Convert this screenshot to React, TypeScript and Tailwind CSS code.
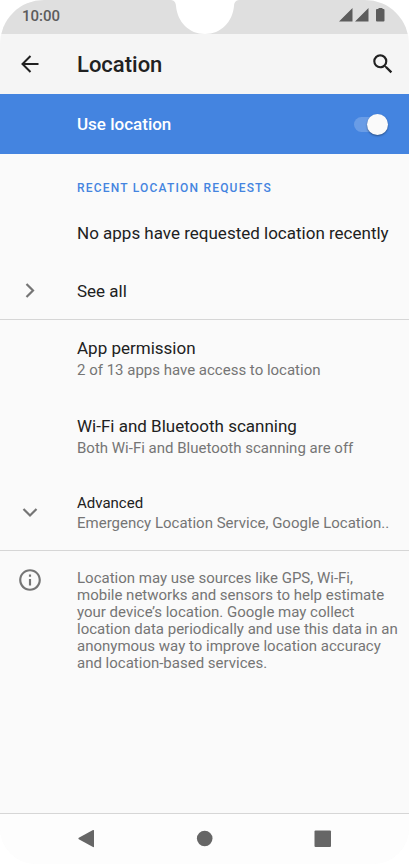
import type { ReactNode } from 'react';
import { useState } from 'react';

const titleClass = 'text-[17px] leading-6 text-[#212121]';
const summaryClass = 'text-[15px] leading-5 text-[#757575]';

type RowProps = {
  icon?: ReactNode;
  className?: string;
  children: ReactNode;
};

/** Settings row: fixed icon gutter on the left, text on the right. */
function Row({ icon, className = '', children }: RowProps) {
  return (
    <button type="button" className={`flex w-full items-center text-left ${className}`}>
      <span className="flex w-[77px] shrink-0 pl-[18px] text-[#757575]">{icon}</span>
      <span className="flex min-w-0 flex-1 flex-col">{children}</span>
    </button>
  );
}

function StatusBar() {
  return (
    <div className="relative flex h-[34px] items-start justify-between bg-[#dfdfdf] pr-6 pl-[22px] text-[#5c5c5c]">
      <span className="pt-[6px] text-[15px] leading-5 font-medium">10:00</span>
      {/* camera notch */}
      <svg className="absolute top-0 left-1/2 -translate-x-1/2" width="70" height="34" viewBox="0 0 70 34" aria-hidden="true">
        <path d="M1 0C4 .4 5.800 2 6 6C7.500 22 19 34 35 34C51 34 62.500 22 64 6C64.200 2 66 .4 69 0Z" fill="#fff" />
      </svg>
      <svg className="mt-2" width="46" height="14" viewBox="0 0 46 14" fill="currentColor" aria-hidden="true">
        <path d="M0 13.500 13.500 0V13.500ZM16 13.500 29.500 0V13.500Z" />
        <path d="M39.500 0H43.500V1H44.500Q45.500 1 45.500 2V12.500Q45.500 13.500 44.500 13.500H38Q37 13.500 37 12.500V2Q37 1 38 1H39.500Z" />
      </svg>
    </div>
  );
}

function Header() {
  return (
    <header className="flex h-[60px] items-center bg-[#f5f5f5] text-[#212121]">
      <div className="flex w-[77px] shrink-0 pl-[18px]">
        <button type="button" aria-label="Back">
          <svg width="24" height="24" viewBox="0 0 24 24" fill="none" stroke="currentColor" strokeWidth="2" aria-hidden="true">
            <path d="M20.500 12H5M12.500 4 4.500 12 12.500 20" />
          </svg>
        </button>
      </div>
      <h1 className="flex-1 pt-[2px] text-[22px] leading-7 font-medium">Location</h1>
      <button type="button" aria-label="Search" className="mr-[13px]">
        <svg width="26" height="26" viewBox="0 0 24 24" fill="currentColor" aria-hidden="true">
          <path d="M15.500 14h-.79l-.28-.27A6.471 6.471 0 0 0 16 9.500 6.500 6.500 0 1 0 9.500 16c1.610 0 3.090-.59 4.230-1.570l.27.28v.79l5 4.990L20.490 19l-4.990-5zm-6 0C7.010 14 5 11.990 5 9.500S7.010 5 9.500 5 14 7.010 14 9.500 11.990 14 9.500 14z" />
        </svg>
      </button>
    </header>
  );
}

function LocationSwitch() {
  const [on, setOn] = useState(true);

  return (
    <label className="flex h-[60px] cursor-pointer items-center justify-between bg-[#4484e0] pr-[21px] pl-[77px]">
      <span className="text-[17px] leading-6 font-medium text-white">Use location</span>
      <input
        type="checkbox"
        role="switch"
        className="sr-only"
        checked={on}
        onChange={(e) => setOn(e.target.checked)}
      />
      <span className={`flex h-[15px] w-[34px] items-center rounded-full bg-white/20 ${on ? 'justify-end' : 'justify-start'}`}>
        <span className="size-[21px] shrink-0 rounded-full bg-[#fafafa] shadow-[0_1px_2px_rgba(0,0,0,0.4)]" />
      </span>
    </label>
  );
}

function NavBar() {
  return (
    <nav className="flex h-[51px] items-center justify-center gap-[94px] border-t border-[#d6d6d6] bg-[#fdfdfd] text-[#666]">
      <button type="button" aria-label="Back">
        <svg width="24" height="24" viewBox="0 0 24 24" fill="currentColor" aria-hidden="true">
          <path d="M3.800 10.800 18 3Q19 2.700 19 3.700V19.500Q19 20.500 18 20L3.800 12.200Q2.800 11.500 3.800 10.800Z" />
        </svg>
      </button>
      <button type="button" aria-label="Home">
        <svg width="24" height="24" viewBox="0 0 24 24" fill="currentColor" aria-hidden="true">
          <circle cx="11.700" cy="11.500" r="7.800" />
        </svg>
      </button>
      <button type="button" aria-label="Overview">
        <svg width="24" height="24" viewBox="0 0 24 24" fill="currentColor" aria-hidden="true">
          <rect x="3.500" y="3.400" width="16.500" height="16.500" rx="1" />
        </svg>
      </button>
    </nav>
  );
}

export default function App() {
  return (
    <div className="min-h-screen bg-white font-['Roboto',sans-serif]">
      <div className="flex min-h-screen flex-col overflow-hidden rounded-t-[44px] rounded-b-[36px] bg-[#fafafa]">
        <StatusBar />
        <Header />
        <main className="flex-1">
          <LocationSwitch />

          <section className="border-b border-[#d6d6d6]">
            <h2 className="pt-6 pb-[6px] pl-[77px] text-xs leading-5 font-medium tracking-widest text-[#4484e0] uppercase">
              Recent location requests
            </h2>
            <p className={`py-[17px] pl-[77px] whitespace-nowrap ${titleClass}`}>No apps have requested location recently</p>
            <Row
              className="h-[57px]"
              icon={
                <svg width="24" height="24" viewBox="0 0 24 24" fill="none" stroke="currentColor" strokeWidth="2.200" aria-hidden="true">
                  <path d="M8.500 5 15 11.500 8.500 18" />
                </svg>
              }
            >
              <span className={titleClass}>See all</span>
            </Row>
          </section>

          <section className="border-b border-[#d6d6d6]">
            <Row className="pt-4 pb-[18px]">
              <span className={titleClass}>App permission</span>
              <span className={summaryClass}>2 of 13 apps have access to location</span>
            </Row>
            <Row className="pt-4 pb-[18px]">
              <span className={titleClass}>Wi-Fi and Bluetooth scanning</span>
              <span className={summaryClass}>Both Wi-Fi and Bluetooth scanning are off</span>
            </Row>
            <Row
              className="py-[17px]"
              icon={
                <svg width="24" height="24" viewBox="0 0 24 24" fill="none" stroke="currentColor" strokeWidth="2.200" aria-hidden="true">
                  <path d="M5.500 8 12 14.500 18.500 8" />
                </svg>
              }
            >
              <span className="text-[15px] leading-5 text-[#212121]">Advanced</span>
              <span className={`whitespace-nowrap ${summaryClass}`}>Emergency Location Service, Google Location..</span>
            </Row>
          </section>

          <section className="flex items-start pt-4 pb-6 text-[#757575]">
            <div className="w-[77px] shrink-0 pl-[17px]">
              <svg width="26" height="26" viewBox="0 0 24 24" fill="currentColor" aria-hidden="true">
                <path d="M11 7h2v2h-2zm0 4h2v6h-2zm1-9C6.480 2 2 6.480 2 12s4.480 10 10 10 10-4.480 10-10S17.520 2 12 2zm0 18c-4.410 0-8-3.590-8-8s3.590-8 8-8 8 3.590 8 8-3.590 8-8 8z" />
              </svg>
            </div>
            <p className="flex-1 pt-[3px] pr-2 text-[15px] leading-[17px]">
              Location may use sources like GPS, Wi-Fi, mobile networks and sensors to help estimate your device’s
              location. Google may collect location data periodically and use this data in an anonymous way to improve
              location accuracy and location-based services.
            </p>
          </section>
        </main>
        <NavBar />
      </div>
    </div>
  );
}
